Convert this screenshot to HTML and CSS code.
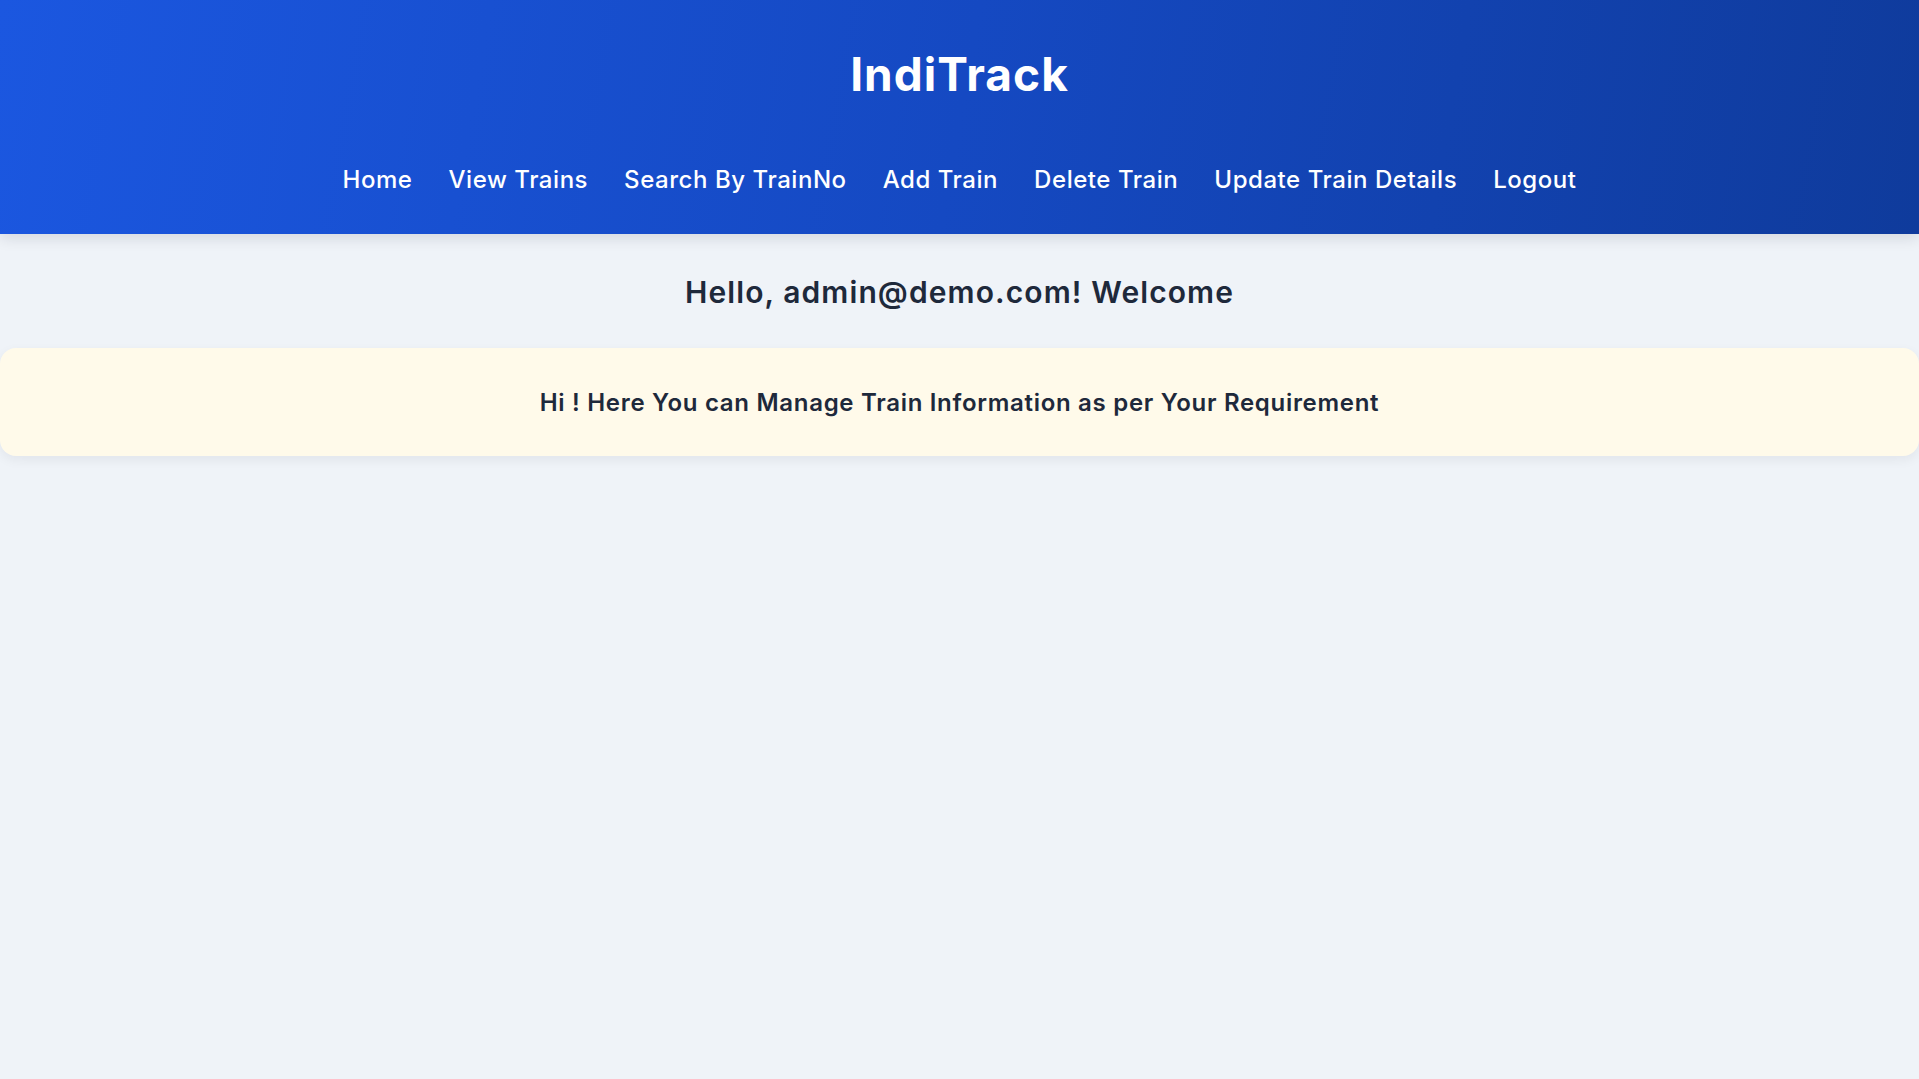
FILE: index.html
```html
<!DOCTYPE html>
<html lang="en">
<head>
<meta charset="utf-8">
<title>IndiTrack</title>
<link rel="stylesheet" href="styles.css">
</head>
<body>
<header class="site-header">
  <h1 class="brand">IndiTrack</h1>
  <nav class="main-nav">
    <a href="#" class="nav-link">Home</a>
    <a href="#" class="nav-link">View Trains</a>
    <a href="#" class="nav-link">Search By TrainNo</a>
    <a href="#" class="nav-link">Add Train</a>
    <a href="#" class="nav-link">Delete Train</a>
    <a href="#" class="nav-link">Update Train Details</a>
    <a href="#" class="nav-link">Logout</a>
  </nav>
</header>
<main class="content">
  <h2 class="welcome">Hello, admin@demo.com! Welcome</h2>
  <section class="info-card">
    <p class="info-text">Hi ! Here You can Manage Train Information as per Your Requirement</p>
  </section>
</main>
</body>
</html>
```
FILE: styles.css
```css
* { box-sizing: border-box; }
html, body { margin: 0; padding: 0; }
body {
  background: #eff3f8;
  font-family: "Inter", "Open Sans", sans-serif;
  color: #1f2937;
  min-height: 100vh;
}
.site-header {
  height: 234px;
  background: linear-gradient(100deg, #1b57e0 0%, #1549c2 50%, #0f3b9c 100%);
  box-shadow: 0 4px 14px rgba(15, 23, 42, 0.12);
  display: flex;
  flex-direction: column;
  align-items: center;
  padding-top: 48px;
}
.brand {
  margin: 0;
  color: #fff;
  font-size: 46px;
  font-weight: 700;
  line-height: 52px;
  letter-spacing: 1px;
}
.main-nav {
  margin-top: 65px;
  display: flex;
  gap: 36px;
  justify-content: center;
}
.nav-link {
  color: #fff;
  text-decoration: none;
  font-size: 24px;
  font-weight: 500;
  line-height: 30px;
  letter-spacing: 0.55px;
}
.content {
  padding-top: 40px;
}
.welcome {
  margin: 0;
  text-align: center;
  font-size: 30px;
  font-weight: 600;
  line-height: 36px;
  letter-spacing: 1.1px;
  color: #1e293b;
}
.info-card {
  margin-top: 38px;
  height: 108px;
  background: #fffaea;
  border-radius: 16px;
  box-shadow: 0 4px 12px rgba(15, 23, 42, 0.06);
  display: flex;
  align-items: center;
  justify-content: center;
}
.info-text {
  margin: 0;
  font-size: 24px;
  font-weight: 600;
  letter-spacing: 0.7px;
  color: #1e293b;
}
```
